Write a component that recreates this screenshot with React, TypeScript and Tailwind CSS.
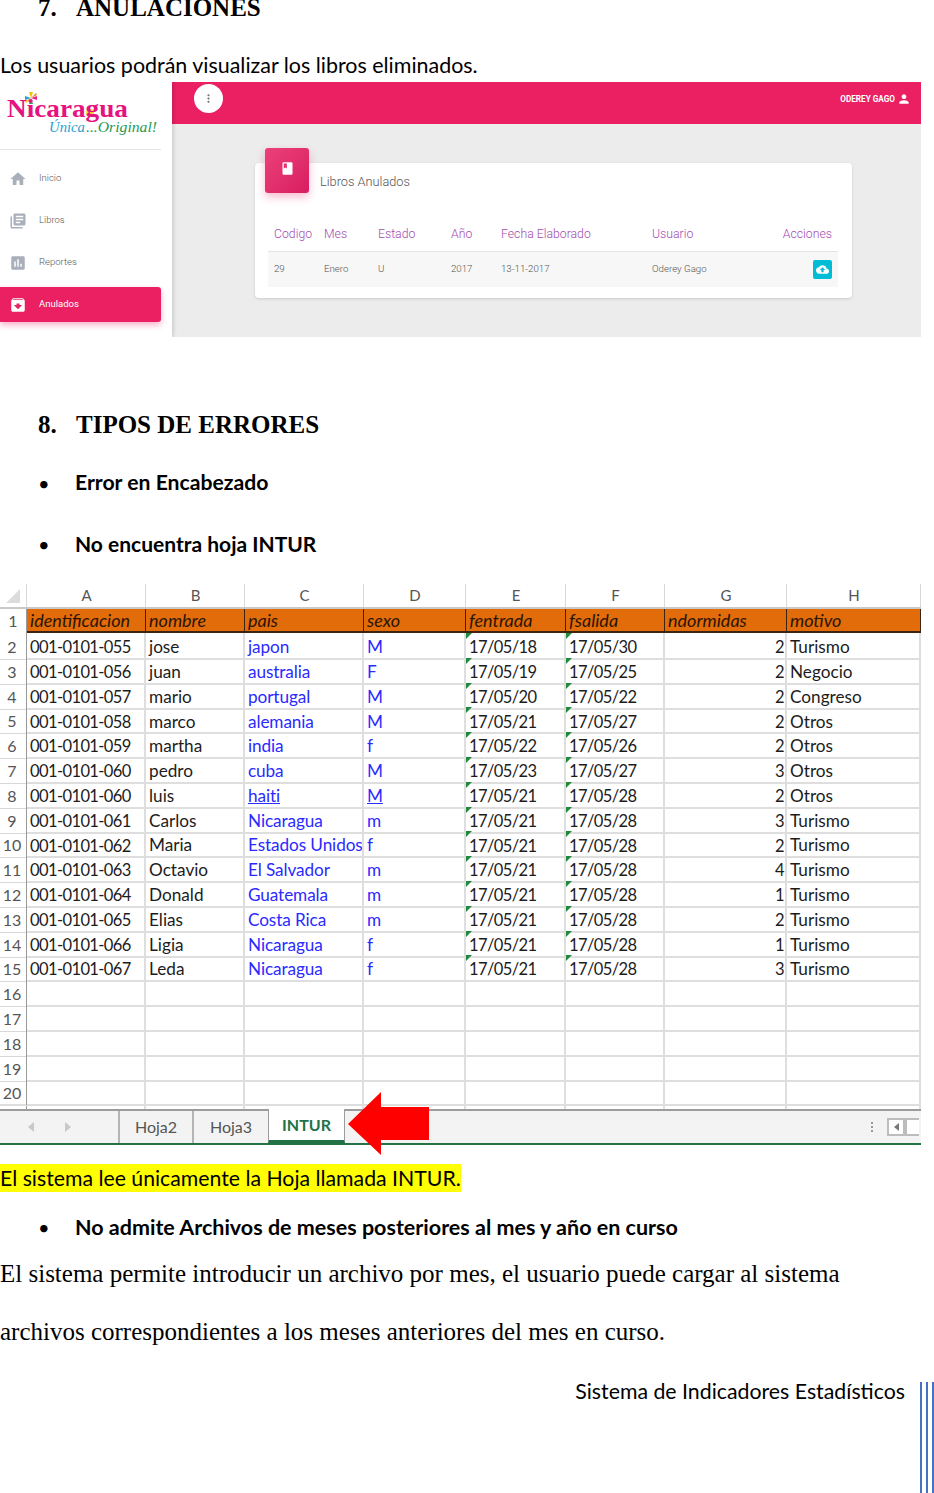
import { MdArchive, MdAssessment, MdBook, MdCloudUpload, MdHome, MdLibraryBooks, MdMoreVert, MdPerson } from "react-icons/md";

const calibri = "font-['Lato','Noto_Sans',sans-serif]";
const times = "font-['Liberation_Serif',serif]";
const roboto = "font-['Roboto',sans-serif]";

const sheetCols = "grid-cols-[27px_119px_99px_119px_102px_100px_99px_122px_134px]";

const sheetHead = ["identificacion", "nombre", "pais", "sexo", "fentrada", "fsalida", "ndormidas", "motivo"];

const sheetRows = [
  ["001-0101-055", "jose", "japon", "M", "17/05/18", "17/05/30", "2", "Turismo"],
  ["001-0101-056", "juan", "australia", "F", "17/05/19", "17/05/25", "2", "Negocio"],
  ["001-0101-057", "mario", "portugal", "M", "17/05/20", "17/05/22", "2", "Congreso"],
  ["001-0101-058", "marco", "alemania", "M", "17/05/21", "17/05/27", "2", "Otros"],
  ["001-0101-059", "martha", "india", "f", "17/05/22", "17/05/26", "2", "Otros"],
  ["001-0101-060", "pedro", "cuba", "M", "17/05/23", "17/05/27", "3", "Otros"],
  ["001-0101-060", "luis", "haiti", "M", "17/05/21", "17/05/28", "2", "Otros"],
  ["001-0101-061", "Carlos", "Nicaragua", "m", "17/05/21", "17/05/28", "3", "Turismo"],
  ["001-0101-062", "Maria", "Estados Unidos", "f", "17/05/21", "17/05/28", "2", "Turismo"],
  ["001-0101-063", "Octavio", "El Salvador", "m", "17/05/21", "17/05/28", "4", "Turismo"],
  ["001-0101-064", "Donald", "Guatemala", "m", "17/05/21", "17/05/28", "1", "Turismo"],
  ["001-0101-065", "Elias", "Costa Rica", "m", "17/05/21", "17/05/28", "2", "Turismo"],
  ["001-0101-066", "Ligia", "Nicaragua", "f", "17/05/21", "17/05/28", "1", "Turismo"],
  ["001-0101-067", "Leda", "Nicaragua", "f", "17/05/21", "17/05/28", "3", "Turismo"],
  ["", "", "", "", "", "", "", ""],
  ["", "", "", "", "", "", "", ""],
  ["", "", "", "", "", "", "", ""],
  ["", "", "", "", "", "", "", ""],
];

const navItems = [
  { label: "Inicio", icon: MdHome },
  { label: "Libros", icon: MdLibraryBooks },
  { label: "Reportes", icon: MdAssessment },
];

function Logo() {
  return (
    <svg width="172" height="67" viewBox="0 0 172 67">
      <g transform="translate(31 16)">
        <path d="M0 0L-2 -6L2 -6Z" fill="#f2c200" />
        <path d="M0 0L6 -2L6 2Z" fill="#e91e8c" />
        <path d="M0 0L2 6L-2 6Z" fill="#2aa65a" />
        <path d="M0 0L-6 2L-6 -2Z" fill="#2a9fd6" />
        <path d="M0 0L5 -5L6 -3Z" fill="#f08a24" />
        <path d="M0 0L-5 5L-6 3Z" fill="#f2c200" />
      </g>
      <circle cx="90" cy="31" r="4" fill="#f7dc2e" />
      <text x="7" y="35" fontFamily="'Liberation Serif', serif" fontWeight="700" fontSize="25" fill="#e6127f" textLength="121" lengthAdjust="spacingAndGlyphs">
        Nicaragua
      </text>
      <text x="49" y="50" fontFamily="'Liberation Serif', serif" fontStyle="italic" fontSize="15" fill="#2b9fd0" textLength="36" lengthAdjust="spacingAndGlyphs">
        Única
      </text>
      <text x="86" y="50" fontFamily="'Liberation Serif', serif" fontStyle="italic" fontSize="15" fill="#1f9a55" textLength="71" lengthAdjust="spacingAndGlyphs">
        ...Original!
      </text>
    </svg>
  );
}

function AppShot() {
  return (
    <div className={`flex h-[255px] w-[921px] overflow-hidden bg-[#ececec] ${roboto}`}>
      <div className="z-10 h-full w-[172px] shrink-0 bg-white shadow-[1px_0_4px_rgba(0,0,0,0.18)]">
        <div className="h-[67px]">
          <Logo />
        </div>
        <div className="h-px w-[161px] bg-[#e5e5e5]" />
        <div className="mt-[11px] flex w-[161px] flex-col gap-[7px]">
          {navItems.map((item) => (
            <div key={item.label} className="flex h-[35px] items-center pl-[9px]">
              <item.icon className="size-[18px] text-[#a9afbb]" />
              <span className="ml-[12px] text-[9.5px] font-light text-[#555]">{item.label}</span>
            </div>
          ))}
          <div className="flex h-[35px] items-center rounded-r-[3px] bg-[#ea2062] pl-[9px] shadow-[0_3px_6px_rgba(233,30,99,0.35)]">
            <MdArchive className="size-[18px] text-white" />
            <span className="ml-[12px] text-[9.5px] text-white">Anulados</span>
          </div>
        </div>
      </div>
      <div className="flex-1">
        <div className="flex h-[42px] items-start justify-between bg-[#ea2062] pl-[22px] pr-[10px]">
          <div className="mt-[2px] flex size-[29px] items-center justify-center rounded-full bg-white">
            <MdMoreVert className="size-[13px] text-[#777]" />
          </div>
          <div className="mt-[10px] flex items-center gap-[2px] text-[8.2px] font-bold text-white">
            ODEREY GAGO
            <MdPerson className="size-[14px]" />
          </div>
        </div>
        <div className="ml-[83px] mt-[39px] flex w-[597px] flex-col rounded-[4px] bg-white pb-[11px] shadow-[0_1px_3px_rgba(0,0,0,0.14)]">
          <div className="-mt-[15px] flex pl-[10px]">
            <div className="flex h-[45px] w-[44px] items-start justify-center rounded-[3px] bg-gradient-to-br from-[#ec407a] to-[#d81b60] pt-[13px] shadow-[0_4px_8px_rgba(233,30,99,0.3)]">
              <MdBook className="size-[15px] text-white" />
            </div>
            <span className="ml-[11px] mt-[26px] text-[12.75px] font-light leading-[15px] text-[#555]">Libros Anulados</span>
          </div>
          <div className="ml-[13px] mt-[26px] w-[570px]">
            <div className="grid h-[33px] grid-cols-[50px_54px_73px_50px_151px_180px] items-center border-b border-[#e4e4e4] pb-[1px] pl-[6px] text-[12.25px] font-light text-[#a24bb1]">
              <span>Codigo</span>
              <span>Mes</span>
              <span>Estado</span>
              <span>Año</span>
              <span>Fecha Elaborado</span>
              <span className="flex justify-between">
                <span>Usuario</span>
                <span>Acciones</span>
              </span>
            </div>
            <div className="grid h-[35px] grid-cols-[50px_54px_73px_50px_151px_180px] items-center bg-[#f7f7f7] pl-[6px] text-[9.7px] font-light text-[#555]">
              <span>29</span>
              <span>Enero</span>
              <span>U</span>
              <span>2017</span>
              <span>13-11-2017</span>
              <span className="flex items-center justify-between">
                <span>Oderey Gago</span>
                <span className="flex size-[19px] items-center justify-center rounded-[2px] bg-[#00bcd4]">
                  <MdCloudUpload className="size-[13px] text-white" />
                </span>
              </span>
            </div>
          </div>
        </div>
      </div>
    </div>
  );
}

function Bullet({ text, size }: { text: string; size: string }) {
  return (
    <div className={`flex h-[30px] items-center pl-[38px] font-bold text-black ${size} ${calibri}`}>
      <span className="w-[38px] text-[20px] font-normal">•</span>
      <span className="-ml-[1px]">{text}</span>
    </div>
  );
}

function Sheet() {
  const letters = ["A", "B", "C", "D", "E", "F", "G", "H"];
  return (
    <div className={`relative w-[921px] ${calibri}`}>
      <div className={`grid h-[25px] ${sheetCols} border-b-2 border-[#c9c9c9] text-[15px] text-[#555]`}>
        <div className="flex items-center justify-center border-r border-[#d8d8d8]">
          <svg width="16" height="16" viewBox="0 0 16 16">
            <path d="M15 1V15H1Z" fill="#dcdcdc" />
          </svg>
        </div>
        {letters.map((l) => (
          <div key={l} className="flex items-center justify-center border-r border-[#d8d8d8] pl-[1px]">
            {l}
          </div>
        ))}
      </div>
      <div className={`grid h-[24px] ${sheetCols} text-[18px] italic text-[#2a1505]`}>
        <div className="flex items-center justify-center border-r border-[#999] bg-white text-[16px] not-italic text-[#555]">1</div>
        {sheetHead.map((h) => (
          <div key={h} className="flex items-center overflow-hidden whitespace-nowrap border-r border-b-2 border-[#3d2410] bg-[#e26b0a] pl-[3px]">
            {h}
          </div>
        ))}
      </div>
      {sheetRows.map((row, i) => (
        <div key={i} className={`grid h-[24.8px] ${sheetCols} text-[17.2px] text-[#1c1c1c]`}>
          <div className="flex items-center justify-center border-r border-b border-r-[#999] border-b-[#d8d8d8] pt-[2px] pr-[2px] text-[16px] text-[#555]">{i + 2}</div>
          {row.map((cell, j) => (
            <div
              key={j}
              className={`relative flex items-center overflow-hidden whitespace-nowrap border-r-2 border-b-2 border-[#dedede] pl-[3px] pr-[1px] ${j === 0 || j === 4 || j === 5 || j === 6 ? "pt-[4px] text-[16.5px] tracking-[-0.6px]" : "pt-[3px]"} ${j === 6 ? "justify-end" : ""} ${j === 2 || j === 3 ? "tracking-[-0.1px] text-[#2a2aff]" : ""} ${(j === 2 || j === 3) && i === 6 ? "underline" : ""}`}
            >
              {(j === 4 || j === 5) && cell && (
                <svg width="6" height="6" viewBox="0 0 6 6" className="absolute left-0 top-0">
                  <path d="M0 0H6L0 6Z" fill="#1f8a3b" />
                </svg>
              )}
              {cell}
            </div>
          ))}
        </div>
      ))}
      <div className={`grid h-[24.8px] ${sheetCols} text-[16px] text-[#555]`}>
        <div className="flex items-center justify-center border-r border-[#999] pt-[2px] pr-[2px]">20</div>
        {letters.map((l) => (
          <div key={l} className="border-r-2 border-[#dedede]" />
        ))}
      </div>
      <div className={`grid h-[5px] ${sheetCols} border-t-2 border-[#dedede]`}>
        <div className="border-r border-[#999]" />
        {letters.map((l) => (
          <div key={l} className="border-r-2 border-[#dedede]" />
        ))}
      </div>
      <div className="flex h-[36px] items-start border-y-2 border-t-[#9c9c9c] border-b-[#217346] bg-[#f3f3f3] text-[16px] text-[#555]">
        <div className="flex h-[32px] w-[120px] items-center gap-[31px] border-r-2 border-[#b5b5b5] pl-[28px] text-[#c8c8c8]">
          <svg width="6" height="10" viewBox="0 0 6 10"><path d="M6 0V10L0 5Z" fill="currentColor" /></svg>
          <svg width="6" height="10" viewBox="0 0 6 10"><path d="M0 0V10L6 5Z" fill="currentColor" /></svg>
        </div>
        <div className="flex h-[32px] w-[74px] items-center justify-center border-r-2 border-[#b5b5b5]">Hoja2</div>
        <div className="flex h-[32px] w-[74px] items-center justify-center">Hoja3</div>
        <div className="-mt-[2px] flex h-[34px] w-[77px] items-center justify-center border-x border-b-[3px] border-x-[#9c9c9c] border-b-[#217346] bg-white font-bold text-[#217346]">INTUR</div>
        <div className="ml-auto mr-[2px] flex h-[32px] items-center gap-[14px]">
          <span className="flex flex-col gap-[2px]">
            <span className="size-[2px] bg-[#999]" />
            <span className="size-[2px] bg-[#999]" />
            <span className="size-[2px] bg-[#999]" />
          </span>
          <span className="flex h-[18px] w-[18px] items-center justify-center border-2 border-[#bdbdbd] bg-white">
            <svg width="5" height="8" viewBox="0 0 5 8"><path d="M5 0V8L0 4Z" fill="#777" /></svg>
          </span>
          <span className="-ml-[14px] h-[18px] w-[14px] border-y-2 border-l-2 border-[#bdbdbd] bg-white" />
        </div>
      </div>
      <svg width="82" height="64" viewBox="0 0 82 64" className="absolute left-[348px] top-[508px]">
        <path d="M0 32L33 0V15H81V48H33V63Z" fill="#ff0000" />
      </svg>
    </div>
  );
}

export default function App() {
  return (
    <main className="h-[1493px] w-[934px] overflow-hidden bg-white text-black">
      <div className={`-mt-[7px] flex h-[30px] items-center pl-[38px] text-[25px] font-bold ${times}`}>
        <span className="w-[38px]">7.</span>
        <span>ANULACIONES</span>
      </div>
      <div className={`mt-[28px] flex h-[28px] items-center text-[21.45px] ${calibri}`}>
        Los usuarios podrán visualizar los libros eliminados.
      </div>
      <div className="mt-[3px]">
        <AppShot />
      </div>
      <div className={`mt-[73px] flex h-[30px] items-center pl-[38px] text-[25px] font-bold ${times}`}>
        <span className="w-[38px]">8.</span>
        <span>TIPOS DE ERRORES</span>
      </div>
      <div className="mt-[28px]">
        <Bullet text="Error en Encabezado" size="text-[21.2px]" />
      </div>
      <div className="mt-[31px]">
        <Bullet text="No encuentra hoja INTUR" size="text-[21px]" />
      </div>
      <div className="mt-[25px]">
        <Sheet />
      </div>
      <div className={`mt-[19px] flex h-[28px] w-[461px] items-center whitespace-nowrap bg-[#ffff00] pt-[2px] text-[21.25px] ${calibri}`}>
        El sistema lee únicamente la Hoja llamada INTUR.
      </div>
      <div className="mt-[20px]">
        <Bullet text="No admite Archivos de meses posteriores al mes y año en curso" size="text-[21.5px]" />
      </div>
      <div className={`mt-[18px] flex h-[28px] items-center text-[25px] ${times}`}>
        El sistema permite introducir un archivo por mes, el usuario puede cargar al sistema
      </div>
      <div className={`mt-[30px] flex h-[28px] items-center text-[25px] ${times}`}>
        archivos correspondientes a los meses anteriores del mes en curso.
      </div>
      <div className="mt-[32px] flex h-[115px] justify-end">
        <span className={`mr-[15px] flex h-[28px] items-center text-[21.3px] ${calibri}`}>Sistema de Indicadores Estadísticos</span>
        <span className="mt-[4px] flex gap-[4px]">
          <span className="w-[2px] bg-[#4472c4]" />
          <span className="w-[2px] bg-[#4472c4]" />
          <span className="w-[2px] bg-[#4472c4]" />
        </span>
      </div>
    </main>
  );
}
